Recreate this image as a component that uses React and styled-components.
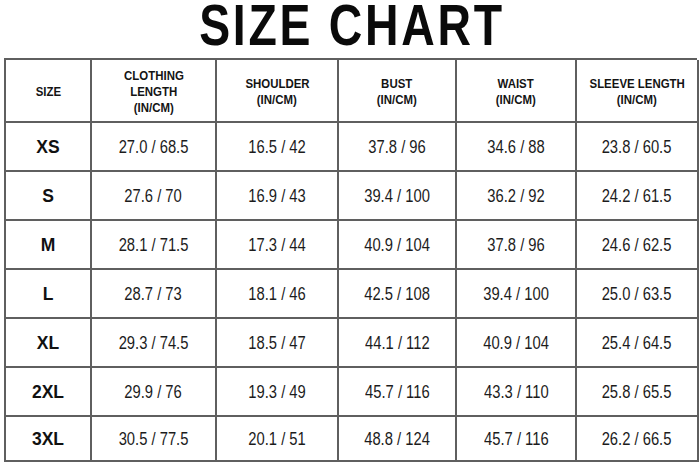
import React from "react";
import styled, { createGlobalStyle } from "styled-components";

const GlobalStyle = createGlobalStyle`
  html, body {
    margin: 0;
    padding: 0;
    background: #fff;
  }
  body {
    font-family: "Liberation Sans", Arial, sans-serif;
    color: #111;
  }
`;

const headers = [
    ["SIZE"],
    ["CLOTHING", "LENGTH", "(IN/CM)"],
    ["SHOULDER", "(IN/CM)"],
    ["BUST", "(IN/CM)"],
    ["WAIST", "(IN/CM)"],
    ["SLEEVE LENGTH", "(IN/CM)"],
];

const rows = [
    ["XS", "27.0 / 68.5", "16.5 / 42", "37.8 / 96", "34.6 / 88", "23.8 / 60.5"],
    ["S", "27.6 / 70", "16.9 / 43", "39.4 / 100", "36.2 / 92", "24.2 / 61.5"],
    ["M", "28.1 / 71.5", "17.3 / 44", "40.9 / 104", "37.8 / 96", "24.6 / 62.5"],
    ["L", "28.7 / 73", "18.1 / 46", "42.5 / 108", "39.4 / 100", "25.0 / 63.5"],
    ["XL", "29.3 / 74.5", "18.5 / 47", "44.1 / 112", "40.9 / 104", "25.4 / 64.5"],
    ["2XL", "29.9 / 76", "19.3 / 49", "45.7 / 116", "43.3 / 110", "25.8 / 65.5"],
    ["3XL", "30.5 / 77.5", "20.1 / 51", "48.8 / 124", "45.7 / 116", "26.2 / 66.5"],
];

const App = () => {
    return (
        <Page>
            <GlobalStyle />
            <Title>
                <TitleText>SIZE CHART</TitleText>
            </Title>
            <Chart>
                {headers.map((lines, idx) => (
                    <HeadCell key={"h" + idx}>
                        {lines.map((line) => (
                            <HeadLine key={line}>{line}</HeadLine>
                        ))}
                    </HeadCell>
                ))}
                {rows.map((row, r) =>
                    row.map((value, c) => (
                        <Cell key={r + "-" + c}>
                            {c === 0 ? <SizeLabel>{value}</SizeLabel> : <Value>{value}</Value>}
                        </Cell>
                    ))
                )}
            </Chart>
        </Page>
    );
};

const Page = styled.div`
  width: 700px;
  height: 462px;
  overflow: hidden;
  padding: 0 3px 0 4px;
  box-sizing: border-box;
`;

const Title = styled.h1`
  margin: 0;
  height: 58px;
  display: flex;
  align-items: flex-start;
  justify-content: center;
  font-weight: 700;
  font-size: 58px;
  line-height: 1;
  color: #0a0a0a;
  padding-left: 3px;
`;

const TitleText = styled.span`
  display: inline-block;
  letter-spacing: 3.4px;
  margin-top: -4px;
  transform: scaleX(0.8);
`;

const Chart = styled.div`
  display: grid;
  grid-template-columns: 86px 125px 122px 118px 120px 122px;
  grid-template-rows: 63px repeat(6, 49px) 45px;
  border-top: 2px solid #5f5f5f;
  border-left: 2px solid #5f5f5f;
`;

const HeadCell = styled.div`
  display: flex;
  flex-direction: column;
  align-items: center;
  justify-content: center;
  text-align: center;
  font-weight: 700;
  font-size: 13px;
  line-height: 16px;
  color: #141414;
  border-right: 2px solid #5f5f5f;
  border-bottom: 2px solid #5f5f5f;
  padding-top: 2px;
`;

const HeadLine = styled.span`
  display: block;
  white-space: nowrap;
  transform: scaleX(0.88);
`;

const Cell = styled.div`
  display: flex;
  align-items: center;
  justify-content: center;
  color: #1a1a1a;
  border-right: 2px solid #5f5f5f;
  border-bottom: 2px solid #5f5f5f;
  padding-top: 2px;
`;

const SizeLabel = styled.span`
  font-weight: 700;
  font-size: 17.5px;
  color: #111;
`;

const Value = styled.span`
  display: inline-block;
  white-space: nowrap;
  font-size: 18px;
  color: #1c1c1c;
  transform: scaleX(0.82);
`;

export default App;
